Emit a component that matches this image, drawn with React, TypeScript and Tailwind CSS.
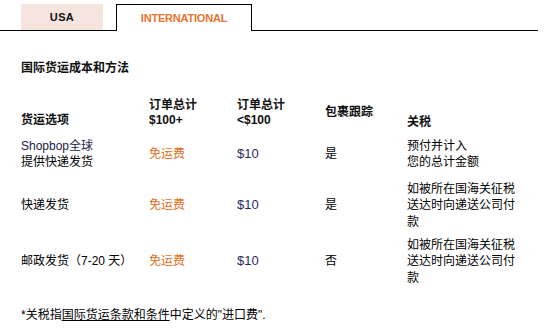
const font = { fontFamily: '"Liberation Sans", "Noto Sans CJK SC", sans-serif' };

const rows = [
  {
    option: ["Shopbop全球", "提供快递发货"],
    over: "免运费",
    under: "$10",
    track: "是",
    duty: ["预付并计入", "您的总计金额"],
    h: "h-[48px]",
  },
  {
    option: ["快递发货"],
    over: "免运费",
    under: "$10",
    track: "是",
    duty: ["如被所在国海关征税", "送达时向递送公司付", "款"],
    h: "h-[55px]",
  },
  {
    option: ["邮政发货（7-20 天）"],
    over: "免运费",
    under: "$10",
    track: "否",
    duty: ["如被所在国海关征税", "送达时向递送公司付", "款"],
    h: "h-[57px]",
  },
];

export default function App() {
  return (
    <div className="w-[547px] h-[332px] bg-white text-[12px] text-black" style={font}>
      {/* tabs */}
      <div className="flex items-end pt-[4px] w-[538px] border-b border-black">
        <div className="ml-[21px] w-[82px] h-[26px] bg-[#f5e5de] flex items-center justify-center text-[11px] tracking-[0.4px] font-bold text-[#111]">
          USA
        </div>
        <div className="ml-[13px] w-[136px] h-[27px] -mb-px border border-b-0 border-black bg-white flex items-center justify-center text-[11px] tracking-[-0.2px] font-bold text-[#e8742f]">
          INTERNATIONAL
        </div>
      </div>

      <div className="pl-[21px]">
        <div className="mt-[29px] h-[16px] leading-[16px] font-bold text-[#111]">国际货运成本和方法</div>

        <table className="mt-[20px] border-collapse table-fixed w-[516px]">
          <colgroup>
            <col className="w-[128px]" />
            <col className="w-[88px]" />
            <col className="w-[88px]" />
            <col className="w-[82px]" />
            <col />
          </colgroup>
          <thead>
            <tr className="h-[34px] font-bold text-[#111] leading-[15px] align-bottom">
              <th className="p-0 pb-[2px] text-left font-bold">货运选项</th>
              <th className="p-0 pb-[2px] text-left font-bold">
                订单总计
                <br />
                $100+
              </th>
              <th className="p-0 pb-[2px] text-left font-bold">
                订单总计
                <br />
                &lt;$100
              </th>
              <th className="p-0 pb-[10px] text-left font-bold">包裹跟踪</th>
              <th className="p-0 text-left font-bold">关税</th>
            </tr>
          </thead>
          <tbody>
            {rows.map((r, i) => (
              <tr key={i} className={`${r.h} align-middle leading-[16.5px]`}>
                <td className="p-0">
                  {r.option.map((t, j) => (
                    <div key={t} className={i === 0 && j === 0 ? "text-[#1a1a4a]" : ""}>
                      {t}
                    </div>
                  ))}
                </td>
                <td className="p-0 text-[#e0701e]">{r.over}</td>
                <td className="p-0 text-[13px] text-[#2a2a5c]">{r.under}</td>
                <td className="p-0">{r.track}</td>
                <td className="p-0">
                  {r.duty.map((t) => (
                    <div key={t}>{t}</div>
                  ))}
                </td>
              </tr>
            ))}
          </tbody>
        </table>

        <div className="mt-[17px] leading-[16px]">
          *关税指<span className="underline">国际货运条款和条件</span>中定义的"进口费".
        </div>
      </div>
    </div>
  );
}
